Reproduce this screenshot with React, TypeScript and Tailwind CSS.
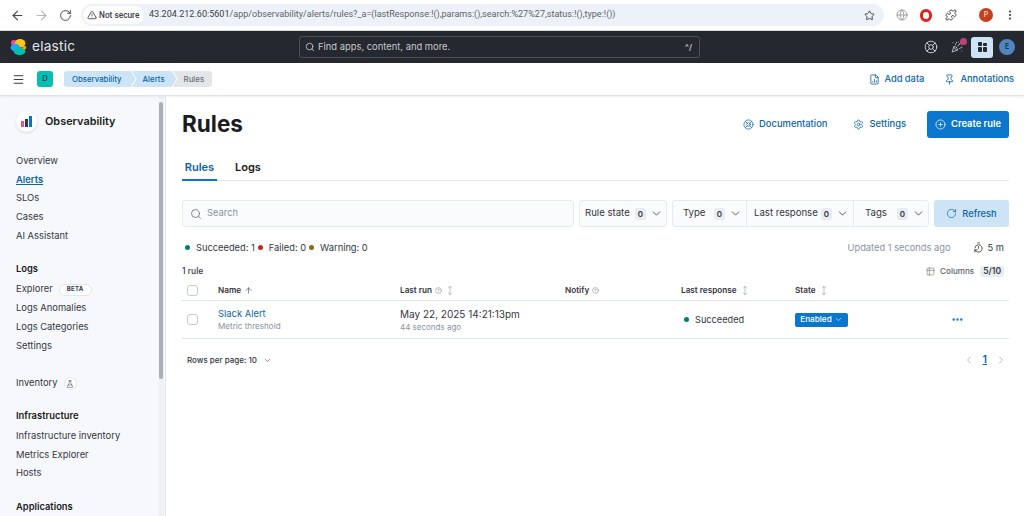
import React from 'react';
import {
  ArrowLeft, ArrowRight, RotateCw, TriangleAlert, Star, Puzzle, EllipsisVertical, Search, LifeBuoy, Menu,
  Settings, CirclePlus, ChevronDown, ArrowUp, MoveVertical, CircleHelp, Table2, Ellipsis,
  ChevronLeft, ChevronRight, FlaskConical, Globe, PartyPopper, Pin, FileChartColumn, TimerReset,
} from 'lucide-react';

const navGroups = [
  { title: '', items: ['Overview', 'Alerts', 'SLOs', 'Cases', 'AI Assistant'] },
  { title: 'Logs', items: ['Explorer', 'Logs Anomalies', 'Logs Categories', 'Settings'] },
  { title: '', items: ['Inventory'] },
  { title: 'Infrastructure', items: ['Infrastructure inventory', 'Metrics Explorer', 'Hosts'] },
  { title: 'Applications', items: [] as string[] },
];

function ElasticLogo() {
  return (
    <svg viewBox="0 0 32 32" className="w-[17px] h-[18px] shrink-0">
      <circle cx="7" cy="8" r="5" fill="#f04e98" />
      <ellipse cx="19" cy="9" rx="10" ry="8" fill="#fec514" />
      <ellipse cx="10" cy="17" rx="9" ry="7" fill="#1ba9f5" />
      <ellipse cx="18" cy="24" rx="11" ry="7.5" fill="#00bfb3" />
      <circle cx="27" cy="17" r="3.5" fill="#f5a700" />
    </svg>
  );
}

function FilterButton({ label, className = '' }: { label: string; className?: string }) {
  return (
    <div className={`h-full flex items-center justify-between whitespace-nowrap text-[9.6px] text-[#343741] ${className}`}>
      <span>{label}</span>
      <span className="flex items-center gap-[4px]">
        <span className="w-[11px] h-[12px] rounded-[2px] bg-[#e9edf3] text-[8px] font-semibold flex items-center justify-center">0</span>
        <ChevronDown className="w-[13px] h-[13px]" strokeWidth={1.5} />
      </span>
    </div>
  );
}

function Checkbox() {
  return <div className="w-[11px] h-[11px] rounded-[3px] border border-[#c3ccd9] bg-white" />;
}

function SortIcon() {
  return <MoveVertical className="w-[10px] h-[11px] text-[#8a919e]" strokeWidth={1.3} />;
}

function Hint() {
  return <CircleHelp className="w-[7px] h-[7px] text-[#69707d]" strokeWidth={1.5} />;
}

export default function App() {
  return (
    <div className="w-[1024px] h-[516px] overflow-hidden flex flex-col bg-white font-['Inter',sans-serif]">
      {/* browser chrome */}
      <div className="h-[31px] shrink-0 flex items-center bg-white border-b border-[#d5d7da]">
        <div className="w-[81px] flex items-center pl-[10px] gap-[9px] text-[#474747]">
          <ArrowLeft className="w-[15px] h-[15px]" strokeWidth={1.8} />
          <ArrowRight className="w-[15px] h-[15px] text-[#b3b5b8]" strokeWidth={1.8} />
          <RotateCw className="w-[13px] h-[13px] ml-[1px]" strokeWidth={1.8} />
        </div>
        <div className="w-[803px] h-[22px] rounded-full bg-[#edf2fa] flex items-center pl-[2px] pr-[9px] font-['Roboto',sans-serif]">
          <div className="w-[61px] h-[18px] pl-[4px] rounded-full bg-white flex items-center gap-[2px] text-[8.3px] font-medium text-[#3c4043] whitespace-nowrap">
            <TriangleAlert className="w-[10px] h-[10px] shrink-0" strokeWidth={2} />
            Not secure
          </div>
          <span className="ml-[5px] text-[9.05px] text-[#3c4043] whitespace-nowrap">
            43.204.212.60:5601<span className="text-[#5f6368]">/app/observability/alerts/rules?_a=(lastResponse:!(),params:(),search:%27%27,status:!(),type:!())</span>
          </span>
          <Star className="ml-auto w-[11px] h-[11px] text-[#3c4043]" strokeWidth={2} />
        </div>
        <div className="flex-1 flex items-center pl-[12px]">
          <Globe className="w-[12px] h-[12px] text-[#a0a0a0]" strokeWidth={2} />
          <div className="ml-[12px] w-[12px] h-[13px] rounded-full border-[3px] border-[#e0201b] bg-white" />
          <Puzzle className="ml-[13px] w-[12px] h-[12px] text-[#474747]" strokeWidth={2} />
          <div className="ml-[22px] w-[14px] h-[14px] rounded-full bg-[#c5401b] text-white text-[7px] flex items-center justify-center">P</div>
          <EllipsisVertical className="ml-[11px] w-[12px] h-[12px] text-[#474747]" strokeWidth={2.5} />
        </div>
      </div>

      {/* kibana header */}
      <div className="h-[32px] shrink-0 bg-[#25282f] flex items-center relative">
        <div className="w-[299px] flex items-center pl-[10px] gap-[5px] text-[#e4e6ea]">
          <ElasticLogo />
          <span className="text-[13.7px] tracking-[0.2px] leading-none">elastic</span>
        </div>
        <div className="w-[401px] h-[22px] rounded-[3px] border border-[#4a4e57] flex items-center px-[5px] gap-[3px] text-[9.4px] text-[#c5c8ce]">
          <Search className="w-[10px] h-[10px]" strokeWidth={2} />
          <span>Find apps, content, and more.</span>
          <span className="ml-auto mr-[2px] text-[8px] font-semibold">^/</span>
        </div>
        <div className="flex-1 flex items-center justify-end pr-[9px]">
          <LifeBuoy className="w-[14px] h-[14px] text-[#d8dbe0] mr-[13px]" strokeWidth={1.5} />
          <div className="relative mr-[8px]">
            <PartyPopper className="w-[12px] h-[12px] text-[#d8dbe0]" strokeWidth={1.5} />
            <div className="absolute -top-[3px] -right-[4px] w-[7px] h-[7px] rounded-full bg-[#c4407c]" />
          </div>
          <div className="w-[22px] h-[21px] rounded-[3px] bg-[#cce4f5] flex items-center justify-center mr-[6px]">
            <div className="grid grid-cols-2 gap-[1px]">
              <div className="w-[4px] h-[4px] bg-[#25282f] rounded-[1px]" />
              <div className="w-[4px] h-[3px] bg-[#25282f] rounded-[1px] self-end" />
              <div className="w-[4px] h-[5px] bg-[#25282f] rounded-[1px]" />
              <div className="w-[4px] h-[5px] bg-[#25282f] rounded-[1px]" />
            </div>
          </div>
          <div className="w-[16px] h-[16px] rounded-full bg-[#4f86bd] text-[#16243a] text-[7px] font-medium flex items-center justify-center">E</div>
        </div>
      </div>

      {/* breadcrumbs */}
      <div className="h-[33px] shrink-0 bg-white border-b border-[#dfe2e8] shadow-[0_1px_2px_rgba(0,0,0,0.06)] flex items-center z-10">
        <Menu className="w-[13px] h-[13px] ml-[12px] text-[#343741]" strokeWidth={1.8} />
        <div className="ml-[12px] w-[16px] h-[16px] rounded-[3px] bg-[#00bfb3] text-[#14323a] text-[7.5px] font-medium flex items-center justify-center">D</div>
        <div className="ml-[11px] flex h-[16px] text-[7.8px] font-medium leading-[16px]">
          <div className="pl-[8px] pr-[14px] bg-[#cce4f5] text-[#0b64a8] rounded-l-[3px] [clip-path:polygon(0_0,calc(100%-5px)_0,100%_50%,calc(100%-5px)_100%,0_100%)]">Observability</div>
          <div className="-ml-[4px] pl-[11px] pr-[12px] bg-[#cce4f5] text-[#0b64a8] [clip-path:polygon(0_0,calc(100%-5px)_0,100%_50%,calc(100%-5px)_100%,0_100%,5px_50%)]">Alerts</div>
          <div className="-ml-[4px] pl-[11px] pr-[8px] bg-[#e3e5e9] text-[#69707d] rounded-r-[3px] [clip-path:polygon(0_0,100%_0,100%_100%,0_100%,5px_50%)]">Rules</div>
        </div>
        <div className="ml-auto flex items-center pr-[10px] text-[9.3px] font-medium text-[#0b64a8]">
          <FileChartColumn className="w-[11px] h-[11px] mr-[4px]" strokeWidth={1.8} />
          Add data
          <Pin className="w-[11px] h-[11px] ml-[20px] mr-[5px]" strokeWidth={1.8} />
          Annotations
        </div>
      </div>

      <div className="flex-1 flex min-h-0">
        {/* sidebar */}
        <div className="w-[166px] shrink-0 bg-[#f6f8fc] border-r border-[#e3e6ec] flex relative overflow-hidden">
          <div className="flex-1 pl-[16px] pt-[10px]">
            <div className="flex items-center gap-[8px] -mt-[1px] h-[32px]">
              <div className="w-[21px] h-[21px] rounded-full bg-white shadow-[0_1px_3px_rgba(0,0,0,0.12)] flex items-end justify-center gap-[1px] pb-[5px]">
                <div className="w-[3px] h-[6px] bg-[#f04e98]" />
                <div className="w-[3px] h-[8px] bg-[#343741]" />
                <div className="w-[3px] h-[11px] bg-[#0077cc]" />
              </div>
              <span className="text-[10.9px] font-semibold text-[#1a1c21]">Observability</span>
            </div>
            <div className="mt-[15px] flex flex-col gap-[14px] text-[9.4px] text-[#343741]">
              {navGroups.map((group, i) => (
                <div key={i} className={i === 2 ? 'mt-[5px]' : i === 3 ? '-mt-[1px]' : ''}>
                  {group.title && (
                    <div className="h-[20px] mb-[1px] leading-[20px] font-semibold text-[#1a1c21]">{group.title}</div>
                  )}
                  {group.items.map((item) => (
                    <div key={item} className={`h-[18.7px] leading-[18.7px] flex items-center whitespace-nowrap ${item === 'Alerts' ? 'font-semibold text-[#0b64a8] underline' : ''}`}>
                      {item}
                      {item === 'Explorer' && (
                        <span className="ml-[6px] h-[12px] px-[7px] rounded-full bg-white border border-[#e3e6ec] text-[6px] font-bold tracking-[0.3px] text-[#343741] flex items-center">BETA</span>
                      )}
                      {item === 'Inventory' && (
                        <span className="ml-[6px] w-[13px] h-[13px] rounded-full bg-white border border-[#e3e6ec] flex items-center justify-center">
                          <FlaskConical className="w-[8px] h-[8px]" strokeWidth={1.5} />
                        </span>
                      )}
                    </div>
                  ))}
                </div>
              ))}
            </div>
          </div>
          <div className="w-[5px] mr-[1px] bg-[#f0f1f4] shrink-0 flex flex-col">
            <div className="h-[277px] w-[4px] bg-[#a9aeb8] mt-[6px] rounded-sm" />
          </div>
        </div>

        {/* main */}
        <div className="flex-1 min-w-0 pl-[16px] pr-[15px]">
          <div className="h-[58px] flex items-start pt-[15px]">
            <h1 className="text-[22.5px] font-bold text-[#1a1c21] leading-none mt-[2px]">Rules</h1>
            <div className="ml-auto flex items-center text-[9.4px] font-medium text-[#0b64a8]">
              <LifeBuoy className="w-[11px] h-[11px] mr-[5px]" strokeWidth={1.6} />
              Documentation
              <Settings className="w-[11px] h-[11px] ml-[26px] mr-[5px]" strokeWidth={1.6} />
              Settings
              <div className="ml-[21px] w-[82px] h-[27px] rounded-[3px] bg-[#0b77cc] text-white font-semibold flex items-center justify-center gap-[5px]">
                <CirclePlus className="w-[11px] h-[11px]" strokeWidth={1.6} />
                Create rule
              </div>
            </div>
          </div>

          <div className="h-[27px] border-b border-[#dfe5ef] flex text-[11px] font-semibold">
            <div className="px-[2px] w-[35px] text-center h-[27px] leading-[26px] text-[#0b64a8] border-b-2 border-[#0b77cc]">Rules</div>
            <div className="ml-[18px] leading-[26px] text-[#1a1c21]">Logs</div>
          </div>

          <div className="mt-[19px] h-[27px] flex">
            <div className="w-[392px] rounded-[3px] bg-[#fafbfd] border border-[#e6eaf1] flex items-center pl-[7px] gap-[5px] text-[9.4px] text-[#8a919e]">
              <Search className="w-[12px] h-[12px] text-[#5a6170]" strokeWidth={1.5} />
              Search
            </div>
            <div className="ml-[5px] w-[88px] pl-[5px] pr-[3px] rounded-[3px] bg-[#fafbfd] border border-[#e6eaf1]">
              <FilterButton label="Rule state" />
            </div>
            <div className="ml-[5px] w-[257px] flex rounded-[3px] bg-[#fafbfd] border border-[#e6eaf1]">
              <FilterButton label="Type" className="w-[73px] pl-[10px] pr-[4px]" />
              <FilterButton label="Last response" className="w-[108px] pl-[7px] pr-[4px] border-x border-[#e6eaf1]" />
              <FilterButton label="Tags" className="flex-1 pl-[11px] pr-[3px]" />
            </div>
            <div className="ml-[5px] flex-1 rounded-[3px] bg-[#cce4f5] text-[#0b64a8] text-[9.3px] font-medium flex items-center justify-center gap-[5px]">
              <RotateCw className="w-[11px] h-[11px]" strokeWidth={1.5} />
              Refresh
            </div>
          </div>

          <div className="mt-[13px] h-[15px] flex items-center text-[9.3px] text-[#343741]">
            <span className="w-[5px] h-[5px] rounded-full bg-[#017d73] mx-[3px]" />
            <span className="ml-[3px]">Succeeded: 1</span>
            <span className="w-[5px] h-[5px] rounded-full bg-[#bd271e] mx-[3px]" />
            <span className="ml-[3px]">Failed: 0</span>
            <span className="w-[5px] h-[5px] rounded-full bg-[#8a6a0a] mx-[3px]" />
            <span className="ml-[3px]">Warning: 0</span>
            <span className="ml-auto text-[#8a919e]">Updated 1 seconds ago</span>
            <TimerReset className="ml-[22px] w-[11px] h-[11px] text-[#343741]" strokeWidth={1.8} />
            <span className="ml-[4px] mr-[5px]">5 m</span>
          </div>

          <div className="mt-[8px] h-[16px] flex items-center text-[8.5px] font-medium text-[#343741]">
            1 rule
            <Table2 className="ml-auto w-[9px] h-[9px] text-[#69707d]" strokeWidth={1.5} />
            <span className="ml-[5px] text-[8.1px] text-[#5a6170]">Columns</span>
            <span className="ml-[6px] mr-[5px] px-[3px] h-[11px] rounded-[2px] bg-[#e9edf3] font-semibold flex items-center">5/10</span>
          </div>

          <div className="h-[20px] mt-[2px] border-b border-[#dfe5ef] grid grid-cols-[36px_182px_165px_116px_114px_1fr] items-center text-[8.2px] font-semibold text-[#343741]">
            <div className="pl-[5px]"><Checkbox /></div>
            <div className="flex items-center gap-[3px]">Name <ArrowUp className="w-[9px] h-[9px]" strokeWidth={1.5} /></div>
            <div className="flex items-center gap-[3px]">Last run <Hint /> <SortIcon /></div>
            <div className="flex items-center gap-[3px]">Notify <Hint /></div>
            <div className="flex items-center gap-[3px]">Last response <SortIcon /></div>
            <div className="flex items-center gap-[3px]">State <SortIcon /></div>
          </div>

          <div className="h-[38px] border-b border-[#dfe5ef] grid grid-cols-[36px_182px_165px_116px_114px_1fr] items-center">
            <div className="pl-[5px]"><Checkbox /></div>
            <div>
              <div className="text-[9.4px] leading-[13px] text-[#0b64a8]">Slack Alert</div>
              <div className="text-[8.1px] leading-[12px] text-[#8a919e]">Metric threshold</div>
            </div>
            <div>
              <div className="text-[10px] leading-[14px] text-[#343741]">May 22, 2025 14:21:13pm</div>
              <div className="text-[8px] leading-[12px] text-[#8a919e]">44 seconds ago</div>
            </div>
            <div />
            <div className="flex items-center text-[9.2px] text-[#343741]">
              <span className="w-[5px] h-[5px] rounded-full bg-[#017d73] ml-[3px] mr-[6px]" />
              Succeeded
            </div>
            <div className="flex items-center">
              <div className="w-[53px] h-[14px] rounded-[2px] bg-[#0b77cc] text-white text-[8.2px] font-medium flex items-center justify-center gap-[2px]">
                Enabled <ChevronDown className="w-[9px] h-[9px]" strokeWidth={1.5} />
              </div>
              <Ellipsis className="ml-[103px] w-[13px] h-[13px] text-[#0b77cc]" strokeWidth={2.5} />
            </div>
          </div>

          <div className="mt-[12px] h-[18px] flex items-center text-[8px] font-medium text-[#343741]">
            <span className="ml-[5px]">Rows per page: 10</span>
            <ChevronDown className="ml-[6px] w-[9px] h-[9px]" strokeWidth={1.5} />
            <ChevronLeft className="ml-auto w-[12px] h-[12px] text-[#a0a6b1]" strokeWidth={1.5} />
            <span className="ml-[8px] text-[10.5px] font-semibold text-[#0b64a8] underline">1</span>
            <ChevronRight className="ml-[8px] mr-[2px] w-[12px] h-[12px] text-[#a0a6b1]" strokeWidth={1.5} />
          </div>
        </div>
      </div>
    </div>
  );
}
